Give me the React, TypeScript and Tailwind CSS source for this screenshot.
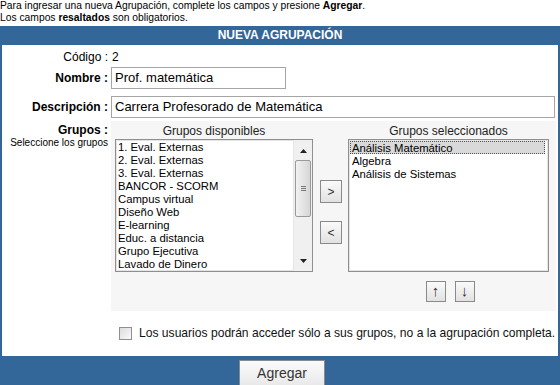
import React from 'react'

const disponibles = [
    '1. Eval. Externas',
    '2. Eval. Externas',
    '3. Eval. Externas',
    'BANCOR - SCORM',
    'Campus virtual',
    'Diseño Web',
    'E-learning',
    'Educ. a distancia',
    'Grupo Ejecutiva',
    'Lavado de Dinero',
]

const seleccionados = ['Análisis Matemático', 'Algebra', 'Análisis de Sistemas']

function SmallButton({ children, className = '' }: { children: React.ReactNode; className?: string }) {
    return (
        <div
            className={`flex items-center justify-center border border-[#8a8a8a] bg-gradient-to-b from-[#fafafa] to-[#e2e2e2] text-[#333] ${className}`}
        >
            {children}
        </div>
    )
}

export default function App() {
    return (
        <div className="w-[560px] h-[385px] overflow-hidden bg-white text-black font-['Liberation_Sans',Arial,sans-serif]">
            <div className="h-[26px] text-[10.3px] leading-[12px]">
                <p>
                    Para ingresar una nueva Agrupación, complete los campos y presione <b>Agregar</b>.
                </p>
                <p>
                    Los campos <b>resaltados</b> son obligatorios.
                </p>
            </div>

            <div className="border-l-2 border-r-2 border-[#336699]">
                <div className="h-[19px] bg-[#336699] text-white font-bold text-[12px] leading-[19px] text-center">
                    NUEVA AGRUPACIÓN
                </div>

                <div className="grid grid-cols-[109px_445px] pt-[2px]">
                    {/* Código */}
                    <div className="h-[20px] flex items-center justify-end pr-[3px] text-[12px]">Código :</div>
                    <div className="h-[20px] flex items-center text-[12px] pl-[1px]">2</div>

                    {/* Nombre */}
                    <div className="h-[22px] flex items-center justify-end pr-[3px] text-[12px] font-bold">Nombre :</div>
                    <div className="h-[22px]">
                        <div className="w-[175px] h-[22px] border border-[#a5a5a5] px-[3px] text-[13px] leading-[20px]">
                            Prof. matemática
                        </div>
                    </div>

                    {/* Descripción */}
                    <div className="h-[22px] mt-[7px] flex items-center justify-end pr-[3px] text-[12px] font-bold">Descripción :</div>
                    <div className="h-[22px] mt-[7px]">
                        <div className="w-[444px] h-[22px] border border-[#a5a5a5] px-[3px] text-[13px] leading-[20px]">
                            Carrera Profesorado de Matemática
                        </div>
                    </div>

                    {/* Grupos */}
                    <div className="mt-[3px] text-right pr-[3px]">
                        <div className="text-[12px] font-bold leading-[14px] mt-[2px]">Grupos :</div>
                        <div className="text-[10px] leading-[12px] whitespace-nowrap">Seleccione los grupos</div>
                    </div>
                    <div className="mt-[3px] h-[190px] bg-[#f6f6f6] flex px-[4px] pt-[2px]">
                        <div className="w-[198px]">
                            <div className="h-[16px] text-[12px] leading-[16px] text-center text-[#222]">Grupos disponibles</div>
                            <div className="h-[133px] border border-[#8f8f8f] bg-white flex shadow-[inset_0_0_0_1px_#e4e4e4]">
                                <div className="flex-1 pl-[2px] pt-[1px]">
                                    {disponibles.map(g => (
                                        <div key={g} className="h-[13px] text-[11.3px] leading-[13px] whitespace-nowrap">
                                            {g}
                                        </div>
                                    ))}
                                </div>
                                <div className="w-[19px] bg-[#f0f0f0] flex flex-col items-center border-l border-[#e6e6e6]">
                                    <svg width="9" height="14" viewBox="0 0 9 14" className="mt-[4px]">
                                        <path d="M1 9 L4.5 5 L8 9 Z" fill="#222" />
                                    </svg>
                                    <div className="mt-[2px] w-[16px] h-[57px] rounded-[2px] border border-[#9a9a9a] bg-gradient-to-r from-[#f2f2f2] to-[#d6d6d6] flex items-center justify-center">
                                        <div className="flex flex-col gap-[1px]">
                                            <div className="w-[5px] h-[1px] bg-[#777]" />
                                            <div className="w-[5px] h-[1px] bg-[#777]" />
                                            <div className="w-[5px] h-[1px] bg-[#777]" />
                                        </div>
                                    </div>
                                    <div className="flex-1" />
                                    <svg width="9" height="14" viewBox="0 0 9 14" className="mb-[3px]">
                                        <path d="M1 5 L8 5 L4.5 9 Z" fill="#222" />
                                    </svg>
                                </div>
                            </div>
                        </div>

                        <div className="w-[22px] ml-[7px] pt-[57px]">
                            <SmallButton className="h-[23px] w-[22px] text-[12px]">&gt;</SmallButton>
                            <SmallButton className="h-[23px] w-[22px] mt-[18px] text-[12px]">&lt;</SmallButton>
                        </div>

                        <div className="w-[201px] ml-[6px]">
                            <div className="h-[16px] text-[12px] leading-[16px] text-center text-[#222]">Grupos seleccionados</div>
                            <div className="h-[133px] border border-[#8f8f8f] bg-white pl-[1px] pt-[1px] pr-[3px] shadow-[inset_0_0_0_1px_#e4e4e4]">
                                {seleccionados.map((g, i) => (
                                    <div
                                        key={g}
                                        className={`h-[13px] text-[11.3px] leading-[12px] whitespace-nowrap pl-[1px] ${
                                            i === 0 ? 'bg-[#d9d9d9] border border-dotted border-[#555]' : 'border border-transparent'
                                        }`}
                                    >
                                        {g}
                                    </div>
                                ))}
                            </div>
                            <div className="flex justify-center gap-[9px] mt-[9px] pl-[3px]">
                                <SmallButton className="h-[21px] w-[20px] text-[15px] font-light">↑</SmallButton>
                                <SmallButton className="h-[21px] w-[20px] text-[15px] font-light">↓</SmallButton>
                            </div>
                        </div>
                    </div>

                    {/* Checkbox */}
                    <div />
                    <div className="h-[45px] flex items-center pl-[8px]">
                        <div className="w-[13px] h-[13px] border border-[#8f8f8f] bg-gradient-to-br from-[#dcdcdc] to-[#fafafa]" />
                        <span className="ml-[7px] text-[12.1px] whitespace-nowrap text-[#111]">
                            Los usuarios podrán acceder sólo a sus grupos, no a la agrupación completa.
                        </span>
                    </div>
                </div>
            </div>

            <div className="h-[40px] bg-[#336699] pt-[4px] flex">
                <div className="ml-[239px] w-[86px] h-[30px] border border-[#8a8a8a] bg-gradient-to-b from-[#fbfbfb] to-[#e6e6e6] text-[14px] text-[#333] text-center leading-[24px]">
                    Agregar
                </div>
            </div>
        </div>
    )
}
